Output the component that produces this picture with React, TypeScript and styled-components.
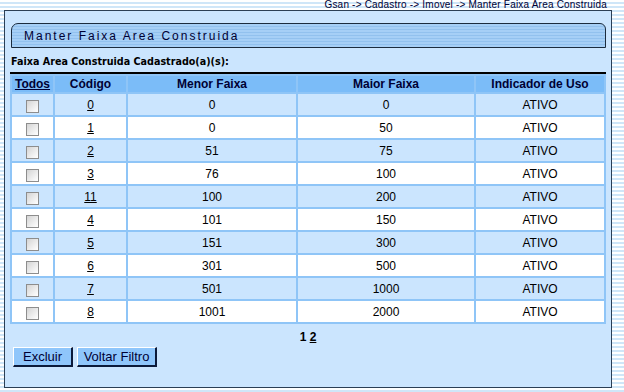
import React from "react";
import styled, { createGlobalStyle } from "styled-components";

const GlobalStyle = createGlobalStyle`
  html, body {
    margin: 0;
    padding: 0;
  }
  body {
    width: 624px;
    height: 392px;
    overflow: hidden;
    font-family: "Liberation Sans", Arial, sans-serif;
    background: repeating-linear-gradient(
      to bottom,
      #ffffff 0px,
      #ffffff 2px,
      #cfe6f8 2px,
      #cfe6f8 4px
    );
  }
`;

const Page = styled.div`
  padding: 0 12px 0 4px;
`;

const Breadcrumb = styled.div`
  height: 10px;
  line-height: 10px;
  font-size: 10px;
  letter-spacing: 0.2px;
  text-align: right;
  padding-right: 5px;
  color: #000033;
  white-space: nowrap;
`;

const Panel = styled.div`
  box-sizing: border-box;
  width: 608px;
  height: 378px;
  border: 1px solid #2b3f55;
  background: #cbe5fe;
  padding: 12px 5px 0 5px;
`;

const TitleBar = styled.div`
  box-sizing: border-box;
  margin-left: 1px;
  width: 595px;
  height: 25px;
  border: 1px solid #1c2c3e;
  border-radius: 7px 6px 0 0;
  background: repeating-linear-gradient(
    to bottom,
    #a6cff6 0px,
    #a6cff6 2px,
    #92c1ee 2px,
    #92c1ee 3px
  );
  display: flex;
  align-items: center;
  padding-left: 12px;
`;

const TitleText = styled.h1`
  margin: 0;
  font-size: 12px;
  font-weight: normal;
  letter-spacing: 2px;
  color: #000033;
`;

const Subtitle = styled.div`
  padding: 7px 0 4px 1px;
  line-height: 13px;
  font-family: "DejaVu Sans", Verdana, sans-serif;
  font-size: 9.6px;
  font-weight: bold;
  color: #000000;
`;

const Table = styled.table`
  width: 596px;
  border-collapse: separate;
  border-spacing: 2px;
  background: #8fc5f7;
  border-top: 2px solid #000000;
  table-layout: fixed;
`;

const HeadCell = styled.th<{ $w: number }>`
  width: ${(p) => p.$w}px;
  height: 16px;
  padding: 0;
  background: #7bbcf8;
  font-size: 12px;
  font-weight: bold;
  color: #000033;
  text-align: center;
`;

const HeadLink = styled.a`
  color: #000033;
  text-decoration: underline;
`;

const Row = styled.tr<{ $alt: boolean }>`
  background: ${(p) => (p.$alt ? "#ffffff" : "#cbe5fe")};
`;

const Cell = styled.td`
  height: 21px;
  padding: 0;
  font-size: 12px;
  color: #000000;
  text-align: center;
  vertical-align: middle;
`;

const CodeLink = styled.a`
  color: #000000;
  text-decoration: underline;
`;

const Check = styled.input.attrs({ type: "checkbox" })`
  appearance: none;
  -webkit-appearance: none;
  box-sizing: border-box;
  width: 13px;
  height: 13px;
  margin: 4px 0 0 0;
  border: 1px solid #8d8d8d;
  background: linear-gradient(135deg, #d4d4d4 0%, #f3f3f3 70%, #ffffff 100%);
  vertical-align: top;
`;

const Pager = styled.div`
  margin-top: 3px;
  height: 20px;
  line-height: 20px;
  width: 596px;
  text-align: center;
  font-size: 12px;
  font-weight: bold;
  color: #000000;
`;

const PageLink = styled.a`
  color: #000000;
  text-decoration: underline;
`;

const Actions = styled.div`
  display: flex;
  gap: 4px;
  padding-left: 3px;
`;

const Button = styled.button<{ $w: number }>`
  box-sizing: border-box;
  width: ${(p) => p.$w}px;
  height: 20px;
  padding: 0;
  background: #8fc6fb;
  border-style: solid;
  border-width: 1px 2px 2px 1px;
  border-color: #ffffff #0b1a3a #0b1a3a #ffffff;
  font-family: "Liberation Sans", Arial, sans-serif;
  font-size: 13px;
  color: #000033;
  line-height: 16px;
  text-align: center;
`;

const rows = [
  { code: "0", min: "0", max: "0" },
  { code: "1", min: "0", max: "50" },
  { code: "2", min: "51", max: "75" },
  { code: "3", min: "76", max: "100" },
  { code: "11", min: "100", max: "200" },
  { code: "4", min: "101", max: "150" },
  { code: "5", min: "151", max: "300" },
  { code: "6", min: "301", max: "500" },
  { code: "7", min: "501", max: "1000" },
  { code: "8", min: "1001", max: "2000" },
];

export default function App() {
  return (
    <>
      <GlobalStyle />
      <Page>
        <Breadcrumb>Gsan -&gt; Cadastro -&gt; Imovel -&gt; Manter Faixa Area Construida</Breadcrumb>
        <Panel>
          <TitleBar>
            <TitleText>Manter Faixa Area Construida</TitleText>
          </TitleBar>
          <Subtitle>Faixa Area Construida Cadastrado(a)(s):</Subtitle>
          <Table>
            <thead>
              <tr>
                <HeadCell $w={41}>
                  <HeadLink href="#">Todos</HeadLink>
                </HeadCell>
                <HeadCell $w={71}>Código</HeadCell>
                <HeadCell $w={168}>Menor Faixa</HeadCell>
                <HeadCell $w={176}>Maior Faixa</HeadCell>
                <HeadCell $w={128}>Indicador de Uso</HeadCell>
              </tr>
            </thead>
            <tbody>
              {rows.map((r, i) => (
                <Row key={r.code} $alt={i % 2 === 1}>
                  <Cell>
                    <Check />
                  </Cell>
                  <Cell>
                    <CodeLink href="#">{r.code}</CodeLink>
                  </Cell>
                  <Cell>{r.min}</Cell>
                  <Cell>{r.max}</Cell>
                  <Cell>ATIVO</Cell>
                </Row>
              ))}
            </tbody>
          </Table>
          <Pager>
            1 <PageLink href="#">2</PageLink>
          </Pager>
          <Actions>
            <Button $w={60}>Excluir</Button>
            <Button $w={80}>Voltar Filtro</Button>
          </Actions>
        </Panel>
      </Page>
    </>
  );
}
